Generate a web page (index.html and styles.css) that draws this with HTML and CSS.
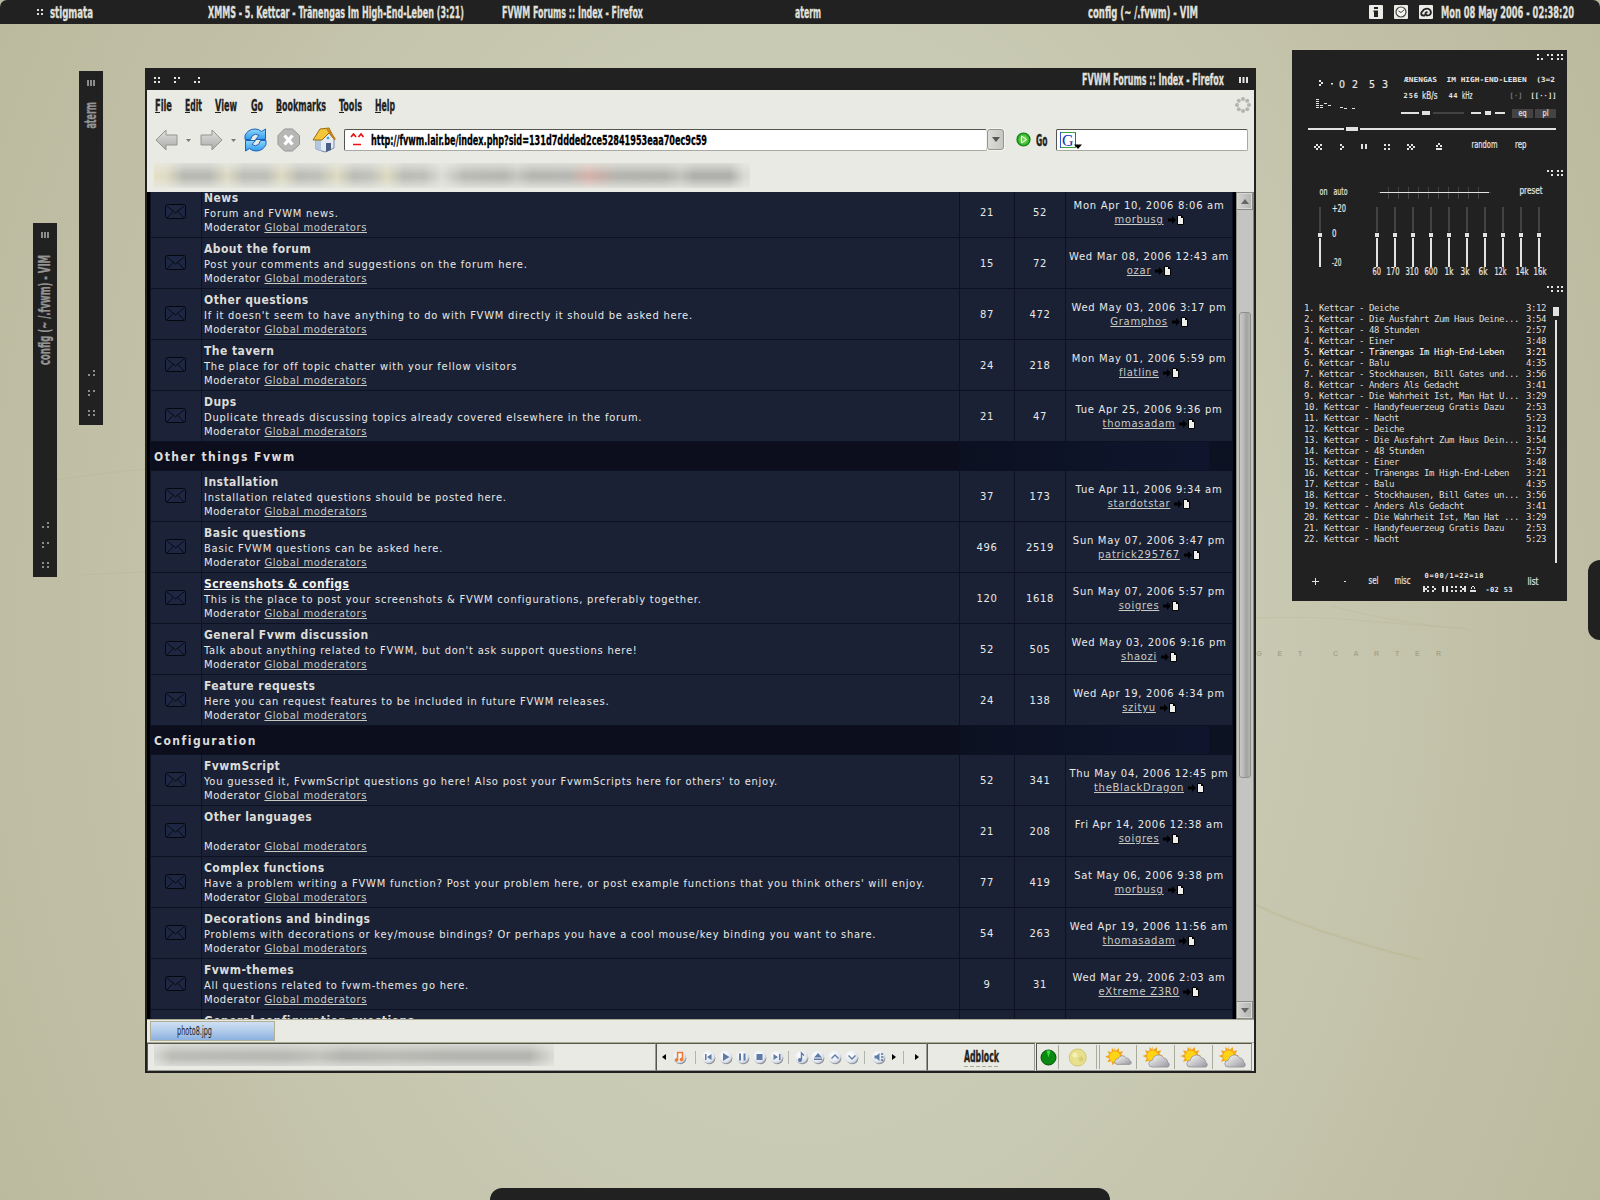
FILE: index.html
```html
<!DOCTYPE html>
<html lang="en">
<head>
<meta charset="utf-8">
<title>stigmata</title>
<link rel="stylesheet" href="styles.css">
</head>
<body>
<svg class="defs" width="0" height="0">
  <defs>
    <linearGradient id="gGrey" x1="0" y1="0" x2="0" y2="1"><stop offset="0" stop-color="#e2e2e0"/><stop offset="1" stop-color="#a9aaa8"/></linearGradient>
    <linearGradient id="gBlue" x1="0" y1="0" x2="0" y2="1"><stop offset="0" stop-color="#8fd6fb"/><stop offset="1" stop-color="#2f9bee"/></linearGradient>
    <linearGradient id="gCloud" x1="0" y1="0" x2="1" y2="1"><stop offset="0" stop-color="#fdfdfd"/><stop offset="1" stop-color="#96969e"/></linearGradient>
    <radialGradient id="gBtn" cx=".4" cy=".35" r=".7"><stop offset="0" stop-color="#ffffff"/><stop offset=".7" stop-color="#e3e8f0"/><stop offset="1" stop-color="#b4bcc9"/></radialGradient>
    <radialGradient id="gGreen"><stop offset="0" stop-color="#b5f57e"/><stop offset="1" stop-color="#17a51c"/></radialGradient>
    <symbol id="mail" viewBox="0 0 21 16"><rect x=".5" y=".5" width="20" height="14" rx="2" fill="#1e2742" stroke="#05070f"/><path d="M2 2l8.500 7L19 2M2 14l6-6.500M19 14l-6-6.500" fill="none" stroke="#070a14"/></symbol>
    <symbol id="goto" viewBox="0 0 16 10"><path d="M0 3.500h4V1l4 4-4 4V6.500h-4z" fill="#000"/><path d="M9.500 .5h4l2 2v7h-6z" fill="#eeeeea" stroke="#000"/><path d="M13 0l3 3h-3z" fill="#000"/></symbol>
    <symbol id="ball" viewBox="0 0 16 15"><circle cx="8.300" cy="8.300" r="6" fill="#85888f"/><circle cx="7.500" cy="7" r="6.500" fill="url(#gBtn)"/></symbol>
    <symbol id="sun" viewBox="0 0 30 24"><path d="M11 0l1.500 4 3.500-3 .2 4.500 4.300-1-2 4 4 2-4 2 1.500 4-4-1-1 4.500-3-3.200-3 3.200-1-4.500-4.500 1 2-4-4.500-2 4.500-2-2-4 4.500 1 .3-4.500 3 3z" fill="#f3a51c"/><circle cx="11.500" cy="10.500" r="5.800" fill="#ffd414"/></symbol>
    <symbol id="cloudS" viewBox="0 0 30 24"><use href="#sun"/><path d="M14 19a3 3 0 0 1 1-6 5 5 0 0 1 9-1 3 3 0 0 1 3.500 3 2 2 0 0 1 0 4z" fill="url(#gCloud)" stroke="#85858c" stroke-width=".7"/></symbol>
    <symbol id="cloudL" viewBox="0 0 30 24"><use href="#sun"/><path d="M11 22a3.500 3.500 0 0 1 0-7 6.500 6.500 0 0 1 12-2.500 4 4 0 0 1 4 4.500 2.600 2.600 0 0 1 0 5z" fill="url(#gCloud)" stroke="#85858c" stroke-width=".7"/></symbol>
  </defs>
</svg>

<main class="desktop">
  <svg class="wallpaper" width="1600" height="1200" viewBox="0 0 1600 1200">
    <path d="M1250 902q60 30 172 58" fill="none" stroke="#b9b88f" stroke-width="2" opacity=".5"/>
    <path d="M1256 618q60-2 100 2t110 8M1330 606q60 16 140 24" fill="none" stroke="#b5b48f" opacity=".3"/>
    <path d="M57 480q50-8 90-11M80 575q30-2 65-3" fill="none" stroke="#b3b28e" opacity=".35"/>
    <text class="carter" y="656" x="1256.500 1277.500 1298 1315 1333 1353.500 1374 1395 1415 1436">GET CARTER</text>
  </svg>

  <header class="topbar">
    <span></span>
    <svg width="7" height="8"><path d="M0 1h2v2H0zM4 1h2v2H4zM0 5h2v2H0zM4 5h2v2H4z" fill="#ddd"/></svg>
    <svg class="lbl" width="44" height="24"><text y="17.500" textLength="43" lengthAdjust="spacingAndGlyphs">stigmata</text></svg>
    <svg class="lbl" width="260" height="24"><text y="17.500" textLength="256" lengthAdjust="spacingAndGlyphs">XMMS - 5. Kettcar - Tränengas Im High-End-Leben (3:21)</text></svg>
    <svg class="lbl" width="145" height="24"><text y="17.500" textLength="141" lengthAdjust="spacingAndGlyphs">FVWM Forums :: Index - Firefox</text></svg>
    <svg class="lbl" width="30" height="24"><text y="17.500" textLength="26" lengthAdjust="spacingAndGlyphs">aterm</text></svg>
    <svg class="lbl" width="114" height="24"><text y="17.500" textLength="110" lengthAdjust="spacingAndGlyphs">config (~ /.fvwm) - VIM</text></svg>
    <svg width="14" height="14"><rect width="14" height="14" rx="1" fill="#ecebe6"/><path d="M5 2h4v2H5zM4.500 5.500H9V12H5V7h-.5z" fill="#222"/></svg>
    <svg width="14" height="14"><rect width="14" height="14" rx="1" fill="#ecebe6"/><circle cx="7" cy="7" r="5" fill="#f5f5f0" stroke="#444" stroke-width="1.200"/><path d="M7 7.500l3-2.500M7 7.500L4.500 6" stroke="#444" fill="none"/></svg>
    <svg width="14" height="14"><rect width="14" height="14" rx="1" fill="#ecebe6"/><path d="M6 10.500H4Q1.500 10 2.500 7.500L5 4.500Q9 2.500 11 5q2 3-.5 5-2.500 1-4-.5-.5-2 2-2.500" fill="none" stroke="#222" stroke-width="1.800"/></svg>
    <svg class="lbl" width="136" height="24"><text y="17.500" textLength="133" lengthAdjust="spacingAndGlyphs">Mon 08 May 2006 - 02:38:20</text></svg>
  </header>

  <svg class="shade shade-aterm" width="24" height="354">
    <path d="M8 9h2v6H8zM11 9h2v6h-2zM14 9h2v6h-2z"/>
    <text transform="translate(16.500 57.500) rotate(-90)" textLength="26.500" lengthAdjust="spacingAndGlyphs">aterm</text>
    <path d="M14 299h2v2h-2zM9 303h2v2H9zM14 303h2v2h-2zM9 319h2v2H9zM14 319h2v2h-2zM9 323h2v2H9zM9 339h2v2H9zM14 339h2v2h-2zM9 343h2v2H9zM14 343h2v2h-2z"/>
  </svg>
  <svg class="shade shade-vim" width="24" height="354">
    <path d="M8 9h2v6H8zM11 9h2v6h-2zM14 9h2v6h-2z"/>
    <text transform="translate(16.500 142) rotate(-90)" textLength="110" lengthAdjust="spacingAndGlyphs">config (~ /.fvwm) - VIM</text>
    <path d="M14 299h2v2h-2zM9 303h2v2H9zM14 303h2v2h-2zM9 319h2v2H9zM14 319h2v2h-2zM9 323h2v2H9zM9 339h2v2H9zM14 339h2v2h-2zM9 343h2v2H9zM14 343h2v2h-2z"/>
  </svg>

  <section class="browser">
    <div class="titlebar">
      <svg width="48" height="22"><path d="M0 9h2v2H0zM4 9h2v2H4zM0 13h2v2H0zM4 13h2v2H4zM20 9h2v2h-2zM24 9h2v2h-2zM20 13h2v2h-2zM44 9h2v2h-2zM40 13h2v2h-2zM44 13h2v2h-2z" fill="#e4e4e0"/></svg>
      <svg class="lbl title" width="157" height="22"><text y="16.500" textLength="142" lengthAdjust="spacingAndGlyphs">FVWM Forums :: Index - Firefox</text></svg>
      <svg width="9" height="22"><path d="M0 9h2v6H0zM3.500 9h2v6h-2zM7 9h2v6H7z" fill="#e4e4e0"/></svg>
    </div>

    <nav class="menubar">
      <svg width="30" height="29"><text y="20.500" textLength="17" lengthAdjust="spacingAndGlyphs">File</text><path d="M0 22.500h5"/></svg>
      <svg width="30" height="29"><text y="20.500" textLength="17" lengthAdjust="spacingAndGlyphs">Edit</text><path d="M0 22.500h5"/></svg>
      <svg width="36" height="29"><text y="20.500" textLength="22" lengthAdjust="spacingAndGlyphs">View</text><path d="M0 22.500h6"/></svg>
      <svg width="25" height="29"><text y="20.500" textLength="12" lengthAdjust="spacingAndGlyphs">Go</text><path d="M0 22.500h6"/></svg>
      <svg width="63" height="29"><text y="20.500" textLength="50" lengthAdjust="spacingAndGlyphs">Bookmarks</text><path d="M0 22.500h6"/></svg>
      <svg width="36" height="29"><text y="20.500" textLength="23" lengthAdjust="spacingAndGlyphs">Tools</text><path d="M0 22.500h5"/></svg>
      <svg width="30" height="29"><text y="20.500" textLength="20" lengthAdjust="spacingAndGlyphs">Help</text><path d="M0 22.500h6"/></svg>
      <svg class="throbber" width="16" height="16"><g fill="#b4b5b1"><circle cx="8" cy="2" r="2"/><circle cx="12.200" cy="3.800" r="2"/><circle cx="14" cy="8" r="2"/><circle cx="12.200" cy="12.200" r="2"/><circle cx="8" cy="14" r="2"/><circle cx="3.800" cy="12.200" r="2"/><circle cx="2" cy="8" r="2"/><circle cx="3.800" cy="3.800" r="2"/></g></svg>
    </nav>

    <div class="navbar">
      <svg width="24" height="24"><path d="M1 12L11 2v5h11v10H11v5z" fill="url(#gGrey)" stroke="#94958f"/></svg>
      <svg width="6" height="24"><path d="M0 11h5l-2.500 3z" fill="#777"/></svg>
      <svg width="24" height="24"><path d="M22 12L12 2v5H1v10h11v5z" fill="url(#gGrey)" stroke="#94958f"/></svg>
      <svg width="6" height="24"><path d="M0 11h5l-2.500 3z" fill="#777"/></svg>
      <svg width="24" height="24"><path d="M1 11.500V7.500Q4 1 11 1q4 0 6.500 2.500L21.500 1v10.500H11.500L15 7.500Q11.500 5 8.500 7.500l-2 4z" fill="url(#gBlue)" stroke="#1c62b8"/><path d="M22 12.500v4Q19 23 12 23q-4 0-6.500-2.500L1.500 23V12.500h10L8 16.500q3.500 2.500 6.500 0l2-4z" fill="url(#gBlue)" stroke="#1c62b8"/></svg>
      <svg width="25" height="24"><path d="M7.500 1h8l7 6.500v9l-7 6.500h-8l-6.500-6.500v-9z" fill="#b7b8b5" stroke="#949590"/><path d="M7.500 7.500l8 9M15.500 7.500l-8 9" stroke="#fff" stroke-width="3.200"/></svg>
      <svg width="26" height="26"><path d="M4 12v10l9 3 9-4v-9l-5-6z" fill="#e4ebf4" stroke="#7388ab"/><path d="M4 12v10l5 2V10z" fill="#b5c6df"/><path d="M14 16h5v7l-5 2z" fill="#4a5f83"/><path d="M1 13L8 2l9-1 6 12-6-7-7 7z" fill="#f5c63a" stroke="#9a6a12"/><path d="M15 2l8 10" stroke="#c4811b" stroke-width="2"/><circle cx="16" cy="11" r="1.300" fill="#36a3d8"/></svg>
      <div class="url">
        <svg width="15" height="14"><path d="M1 4l2.500-3L6 4M8.500 4L11 1l2.500 3M3 11.500h8" fill="none" stroke="#e11" stroke-width="1.700"/></svg>
        <svg class="dark" width="340" height="20"><text y="14.500" textLength="336" lengthAdjust="spacingAndGlyphs">http://fvwm.lair.be/index.php?sid=131d7ddded2ce52841953eaa70ec9c59</text></svg>
      </div>
      <div class="combo"><svg width="8" height="5"><path d="M0 0h8L4 5z" fill="#555"/></svg></div>
      <svg width="15" height="15"><circle cx="7.500" cy="7.500" r="6.500" fill="url(#gGreen)" stroke="#118015" stroke-width="1.200"/><path d="M5.500 4l5 3.500-5 3.500z" fill="#6fd95a" stroke="#fff"/></svg>
      <svg class="dark go" width="14" height="24"><text y="17.500" textLength="11.500" lengthAdjust="spacingAndGlyphs">Go</text></svg>
      <div class="search"><svg width="23" height="18"><rect x=".5" y="1.500" width="15" height="15" fill="#fff" stroke="#3aa53c"/><path d="M.5 1v16" stroke="#2a55cc"/><path d="M15.500 2v12" stroke="#d22"/><text x="2" y="14.500" class="g">G</text><path d="M14 13.500h8l-4 4.500z" fill="#000"/></svg></div>
    </div>

    <div class="bookmarks"><div class="smear smear-marks"></div></div>

    <div class="viewport">
      <div class="forum">
        <div class="row"><svg class="mail"><use href="#mail"/></svg><div class="topic"><h3>News</h3><p>Forum and FVWM news.</p><small>Moderator <a>Global moderators</a></small></div><div class="n">21</div><div class="n">52</div><div class="last"><span>Mon Apr 10, 2006 8:06 am</span><span><a>morbusg</a><svg><use href="#goto"/></svg></span></div></div>
        <div class="row"><svg class="mail"><use href="#mail"/></svg><div class="topic"><h3>About the forum</h3><p>Post your comments and suggestions on the forum here.</p><small>Moderator <a>Global moderators</a></small></div><div class="n">15</div><div class="n">72</div><div class="last"><span>Wed Mar 08, 2006 12:43 am</span><span><a>ozar</a><svg><use href="#goto"/></svg></span></div></div>
        <div class="row"><svg class="mail"><use href="#mail"/></svg><div class="topic"><h3>Other questions</h3><p>If it doesn't seem to have anything to do with FVWM directly it should be asked here.</p><small>Moderator <a>Global moderators</a></small></div><div class="n">87</div><div class="n">472</div><div class="last"><span>Wed May 03, 2006 3:17 pm</span><span><a>Gramphos</a><svg><use href="#goto"/></svg></span></div></div>
        <div class="row"><svg class="mail"><use href="#mail"/></svg><div class="topic"><h3>The tavern</h3><p>The place for off topic chatter with your fellow visitors</p><small>Moderator <a>Global moderators</a></small></div><div class="n">24</div><div class="n">218</div><div class="last"><span>Mon May 01, 2006 5:59 pm</span><span><a>flatline</a><svg><use href="#goto"/></svg></span></div></div>
        <div class="row"><svg class="mail"><use href="#mail"/></svg><div class="topic"><h3>Dups</h3><p>Duplicate threads discussing topics already covered elsewhere in the forum.</p><small>Moderator <a>Global moderators</a></small></div><div class="n">21</div><div class="n">47</div><div class="last"><span>Tue Apr 25, 2006 9:36 pm</span><span><a>thomasadam</a><svg><use href="#goto"/></svg></span></div></div>
        <h2 class="category">Other things Fvwm</h2>
        <div class="row"><svg class="mail"><use href="#mail"/></svg><div class="topic"><h3>Installation</h3><p>Installation related questions should be posted here.</p><small>Moderator <a>Global moderators</a></small></div><div class="n">37</div><div class="n">173</div><div class="last"><span>Tue Apr 11, 2006 9:34 am</span><span><a>stardotstar</a><svg><use href="#goto"/></svg></span></div></div>
        <div class="row"><svg class="mail"><use href="#mail"/></svg><div class="topic"><h3>Basic questions</h3><p>Basic FVWM questions can be asked here.</p><small>Moderator <a>Global moderators</a></small></div><div class="n">496</div><div class="n">2519</div><div class="last"><span>Sun May 07, 2006 3:47 pm</span><span><a>patrick295767</a><svg><use href="#goto"/></svg></span></div></div>
        <div class="row"><svg class="mail"><use href="#mail"/></svg><div class="topic"><h3 class="hover">Screenshots &amp; configs</h3><p>This is the place to post your screenshots &amp; FVWM configurations, preferably together.</p><small>Moderator <a>Global moderators</a></small></div><div class="n">120</div><div class="n">1618</div><div class="last"><span>Sun May 07, 2006 5:57 pm</span><span><a>soigres</a><svg><use href="#goto"/></svg></span></div></div>
        <div class="row"><svg class="mail"><use href="#mail"/></svg><div class="topic"><h3>General Fvwm discussion</h3><p>Talk about anything related to FVWM, but don't ask support questions here!</p><small>Moderator <a>Global moderators</a></small></div><div class="n">52</div><div class="n">505</div><div class="last"><span>Wed May 03, 2006 9:16 pm</span><span><a>shaozi</a><svg><use href="#goto"/></svg></span></div></div>
        <div class="row"><svg class="mail"><use href="#mail"/></svg><div class="topic"><h3>Feature requests</h3><p>Here you can request features to be included in future FVWM releases.</p><small>Moderator <a>Global moderators</a></small></div><div class="n">24</div><div class="n">138</div><div class="last"><span>Wed Apr 19, 2006 4:34 pm</span><span><a>szityu</a><svg><use href="#goto"/></svg></span></div></div>
        <h2 class="category">Configuration</h2>
        <div class="row"><svg class="mail"><use href="#mail"/></svg><div class="topic"><h3>FvwmScript</h3><p>You guessed it, FvwmScript questions go here! Also post your FvwmScripts here for others' to enjoy.</p><small>Moderator <a>Global moderators</a></small></div><div class="n">52</div><div class="n">341</div><div class="last"><span>Thu May 04, 2006 12:45 pm</span><span><a>theBlackDragon</a><svg><use href="#goto"/></svg></span></div></div>
        <div class="row"><svg class="mail"><use href="#mail"/></svg><div class="topic"><h3>Other languages</h3><p></p><small>Moderator <a>Global moderators</a></small></div><div class="n">21</div><div class="n">208</div><div class="last"><span>Fri Apr 14, 2006 12:38 am</span><span><a>soigres</a><svg><use href="#goto"/></svg></span></div></div>
        <div class="row"><svg class="mail"><use href="#mail"/></svg><div class="topic"><h3>Complex functions</h3><p>Have a problem writing a FVWM function? Post your problem here, or post example functions that you think others' will enjoy.</p><small>Moderator <a>Global moderators</a></small></div><div class="n">77</div><div class="n">419</div><div class="last"><span>Sat May 06, 2006 9:38 pm</span><span><a>morbusg</a><svg><use href="#goto"/></svg></span></div></div>
        <div class="row"><svg class="mail"><use href="#mail"/></svg><div class="topic"><h3>Decorations and bindings</h3><p>Problems with decorations or key/mouse bindings? Or perhaps you have a cool mouse/key binding you want to share.</p><small>Moderator <a>Global moderators</a></small></div><div class="n">54</div><div class="n">263</div><div class="last"><span>Wed Apr 19, 2006 11:56 am</span><span><a>thomasadam</a><svg><use href="#goto"/></svg></span></div></div>
        <div class="row"><svg class="mail"><use href="#mail"/></svg><div class="topic"><h3>Fvwm-themes</h3><p>All questions related to fvwm-themes go here.</p><small>Moderator <a>Global moderators</a></small></div><div class="n">9</div><div class="n">31</div><div class="last"><span>Wed Mar 29, 2006 2:03 am</span><span><a>eXtreme Z3R0</a><svg><use href="#goto"/></svg></span></div></div>
        <div class="row"><span class="mail"></span><div class="topic"><h3>General configuration questions</h3></div><div class="n"></div><div class="n"></div><div class="last"></div></div>
      </div>
      <div class="scrollbar">
        <div class="step"><svg width="8" height="5"><path d="M0 5h8L4 0z" fill="#666"/></svg></div>
        <div class="track"><div class="thumb"></div></div>
        <div class="step"><svg width="8" height="5"><path d="M0 0h8L4 5z" fill="#666"/></svg></div>
      </div>
    </div>

    <div class="tabs"><div class="tab"><svg width="38" height="18"><text y="12.500" textLength="35" lengthAdjust="spacingAndGlyphs">photo8.jpg</text></svg></div></div>

    <footer class="status">
      <div class="panel"><div class="smear smear-status"></div></div>
      <div class="panel">
        <svg width="269" height="26" viewBox="658 1044 269 26">
          <path d="M667 1054v6l-4-3zM893 1054v6l4-3zM916 1054v6l4-3z" fill="#000"/>
          <path d="M696.500 1051v13M789.500 1051v13M865.500 1051v13M904.500 1051v13" stroke="#b1b3ad"/>
          <use href="#ball" x="673" y="1050" width="16" height="15"/><use href="#ball" x="702" y="1050" width="16" height="15"/><use href="#ball" x="719" y="1050" width="16" height="15"/><use href="#ball" x="736" y="1050" width="16" height="15"/><use href="#ball" x="753" y="1050" width="16" height="15"/><use href="#ball" x="770" y="1050" width="16" height="15"/><use href="#ball" x="795" y="1050" width="16" height="15"/><use href="#ball" x="811" y="1050" width="16" height="15"/><use href="#ball" x="828" y="1050" width="16" height="15"/><use href="#ball" x="845" y="1050" width="16" height="15"/><use href="#ball" x="872" y="1050" width="16" height="15"/>
          <path d="M678.500 1060v-7.500h5v6.500" fill="none" stroke="#ee7a30" stroke-width="1.500"/><circle cx="677.500" cy="1060" r="1.800" fill="#ee7a30"/><circle cx="682.500" cy="1059.500" r="1.800" fill="#ee7a30"/>
          <g fill="#5e7ba5"><path d="M706 1054h1.500v6H706zM712.500 1054v6l-4.500-3zM724 1053v8l6.500-4zM740 1053.500h2v7h-2zM744.500 1053.500h2v7h-2zM757.500 1054h6v6h-6zM774.500 1054v6l4.500-3zM780 1054h1.500v6H780zM815 1057.500l4-4.500 4 4.500zM815 1058.500h8v1.500h-8z"/><circle cx="801" cy="1060" r="2"/><path d="M875.500 1055.500h2l3-2.500v8l-3-2.500h-2z"/></g>
          <path d="M802.500 1060v-7l2.500 2.500M832.500 1058.500l3.500-3.500 3.500 3.500M849.500 1055.500l3.500 3.500 3.500-3.500M882 1054.500l2-1M882 1057h2.500M882 1059.500l2 1" fill="none" stroke="#5e7ba5" stroke-width="1.400"/>
        </svg>
      </div>
      <div class="panel"><svg class="dark adblock" width="37" height="26"><text y="17.500" textLength="35" lengthAdjust="spacingAndGlyphs">Adblock</text><path d="M0 22.500h35" stroke="#a5a88f" stroke-dasharray="4 2"/></svg></div>
      <div class="panel">
        <svg width="214" height="26" viewBox="1037 1044 214 26">
          <circle cx="1048.500" cy="1057.500" r="7.500" fill="#0a8a12" stroke="#04500a"/><path d="M1048.500 1057.500l-2-7h4z" fill="#34e23c"/>
          <circle cx="1077.700" cy="1057.500" r="8.500" fill="#e9e08e" stroke="#cfc66f"/><circle cx="1075" cy="1055" r="2.500" fill="#f6f0b6"/><circle cx="1081" cy="1059" r="2.500" fill="#d9cf7a"/>
          <path d="M1058.500 1045v24M1096.500 1045v24M1099.500 1045v24M1136.500 1045v24M1174.500 1045v24M1212.500 1045v24" stroke="#aaab9a"/>
          <use href="#cloudS" x="1104" y="1047" width="28" height="22"/><use href="#cloudL" x="1141" y="1046" width="30" height="23"/><use href="#cloudL" x="1179" y="1046" width="30" height="23"/><use href="#cloudL" x="1217" y="1046" width="30" height="23"/>
        </svg>
      </div>
    </footer>
  </section>

  <section class="xmms">
    <svg width="275" height="116" viewBox="1292 50 275 116">
      <path class="w" d="M1537 54h2v2h-2zM1537 58h2v2h-2zM1541 58h2v2h-2zM1547 54h2v2h-2zM1551 54h2v2h-2zM1551 58h2v2h-2zM1557 54h2v2h-2zM1561 54h2v2h-2zM1557 58h2v2h-2zM1561 58h2v2h-2z"/>
      <path class="w" d="M1319 80h2v2h2v2h-2v2h-2v-2h2v-2h-2zM1331 83h2v1.500h-2z"/>
      <path class="w" d="M1316 99h3v1h-3zM1316 101h3v1h-3zM1316 103h3v1h-3zM1316 105h3v1h-3zM1316 107h3v1h-3zM1320 105h3v1h-3zM1320 107h3v1h-3zM1324 103h3v1h-3zM1328 105h3v1h-3zM1340 107h3v1h-3zM1344 108h3v1h-3zM1352 108h3v1h-3z"/>
      <g class="pix"><text x="1339 1352 1369 1382" y="88" font-size="10.500">0253</text>
      <text class="b" x="1404" y="82" font-size="7" textLength="151" lengthAdjust="spacingAndGlyphs" xml:space="preserve">ÆNENGAS  IM HIGH-END-LEBEN  (3=2</text>
      <text class="b" x="1403.500" y="97.500" font-size="7" textLength="14.500">256</text><text x="1422" y="99" font-size="11" textLength="15.500" lengthAdjust="spacingAndGlyphs">kB/s</text>
      <text class="b" x="1448.500" y="97.500" font-size="7" textLength="9">44</text><text x="1462" y="99" font-size="11" textLength="10.500" lengthAdjust="spacingAndGlyphs">kHz</text>
      <text class="b dim" x="1509.500" y="98" font-size="7" textLength="13">[·]</text><text class="b" x="1530.500" y="98" font-size="7" textLength="26">[[··]]</text></g>
      <path class="w" d="M1401 112h18v2h-18zM1422 111h8v4h-8zM1471 112h10v2h-10zM1485 111h6v4h-6zM1495 112h10v2h-10zM1308 128h36v2h-36zM1346 127h12v4h-12zM1360 128h196v2h-196z"/>
      <path class="d" d="M1433 112h31v2h-31zM1512 109h21v9h-21zM1535 109h21v9h-21z"/>
      <g class="pix"><text x="1518.500" y="116" font-size="9.500" textLength="8" lengthAdjust="spacingAndGlyphs">eq</text><text x="1542.500" y="116" font-size="9.500" textLength="6" lengthAdjust="spacingAndGlyphs">pl</text>
      <text x="1471.500" y="148" font-size="10.500" textLength="26" lengthAdjust="spacingAndGlyphs">random</text><text x="1515" y="148" font-size="10.500" textLength="11.500" lengthAdjust="spacingAndGlyphs">rep</text></g>
      <path class="w" d="M1316 144h2v2h-2zM1314 146h2v2h-2zM1316 148h2v2h-2zM1320 144h2v2h-2zM1318 146h2v2h-2zM1320 148h2v2h-2zM1340 144h2v2h-2zM1342 146h2v2h-2zM1340 148h2v2h-2zM1361 144h2v5h-2zM1365 144h2v5h-2zM1384 144h2v2h-2zM1388 144h2v2h-2zM1384 148h2v2h-2zM1388 148h2v2h-2zM1407 144h2v2h-2zM1409 146h2v2h-2zM1407 148h2v2h-2zM1411 144h2v2h-2zM1413 146h2v2h-2zM1411 148h2v2h-2zM1438 143h2v2h-2zM1436 145h2v2h-2zM1440 145h2v2h-2zM1436 148h6v2h-6z"/>
    </svg>
    <svg width="275" height="116" viewBox="1292 166 275 116">
      <path class="w" d="M1547 170h2v2h-2zM1551 170h2v2h-2zM1551 174h2v2h-2zM1557 170h2v2h-2zM1561 170h2v2h-2zM1557 174h2v2h-2zM1561 174h2v2h-2z"/>
      <path class="d" d="M1388 187h1v12h-1zM1398 187h1v12h-1zM1408 187h1v12h-1zM1418 187h1v12h-1zM1428 187h1v12h-1zM1438 187h1v12h-1zM1448 187h1v12h-1zM1458 187h1v12h-1zM1468 187h1v12h-1zM1478 187h1v12h-1zM1378 192h113v1h-113z"/>
      <path class="w" d="M1380 192h109v1h-109z"/>
      <path class="d" d="M1319 207h2v25h-2zM1376 207h2v25h-2zM1394 207h2v25h-2zM1412 207h2v25h-2zM1430 207h2v25h-2zM1448 207h2v25h-2zM1466 207h2v25h-2zM1484 207h2v25h-2zM1502 207h2v25h-2zM1520 207h2v25h-2zM1538 207h2v25h-2z"/>
      <path class="w" d="M1318 233h4v4h-4zM1375 233h4v4h-4zM1393 233h4v4h-4zM1411 233h4v4h-4zM1429 233h4v4h-4zM1447 233h4v4h-4zM1465 233h4v4h-4zM1483 233h4v4h-4zM1501 233h4v4h-4zM1519 233h4v4h-4zM1537 233h4v4h-4zM1319 238h2v29h-2zM1376 238h2v29h-2zM1394 238h2v29h-2zM1412 238h2v29h-2zM1430 238h2v29h-2zM1448 238h2v29h-2zM1466 238h2v29h-2zM1484 238h2v29h-2zM1502 238h2v29h-2zM1520 238h2v29h-2zM1538 238h2v29h-2z"/>
      <g class="pix" font-size="10.500">
        <text x="1319.500" y="195" textLength="8" lengthAdjust="spacingAndGlyphs">on</text><text x="1333.500" y="195" textLength="14" lengthAdjust="spacingAndGlyphs">auto</text><text x="1519.500" y="194" textLength="23" lengthAdjust="spacingAndGlyphs">preset</text>
        <text x="1332" y="211.500" textLength="14" lengthAdjust="spacingAndGlyphs">+20</text><text x="1332" y="236.500" textLength="4.500" lengthAdjust="spacingAndGlyphs">0</text><text x="1332" y="265.500" textLength="9.500" lengthAdjust="spacingAndGlyphs">-20</text>
        <text x="1372.500" y="275" textLength="8.500" lengthAdjust="spacingAndGlyphs">60</text><text x="1386.500" y="275" textLength="13" lengthAdjust="spacingAndGlyphs">170</text><text x="1405.500" y="275" textLength="13" lengthAdjust="spacingAndGlyphs">310</text><text x="1424.500" y="275" textLength="13" lengthAdjust="spacingAndGlyphs">600</text><text x="1444.500" y="275" textLength="9" lengthAdjust="spacingAndGlyphs">1k</text><text x="1460.500" y="275" textLength="9" lengthAdjust="spacingAndGlyphs">3k</text><text x="1478.500" y="275" textLength="9" lengthAdjust="spacingAndGlyphs">6k</text><text x="1494.500" y="275" textLength="12" lengthAdjust="spacingAndGlyphs">12k</text><text x="1515.500" y="275" textLength="13" lengthAdjust="spacingAndGlyphs">14k</text><text x="1533.500" y="275" textLength="13" lengthAdjust="spacingAndGlyphs">16k</text>
      </g>
    </svg>
    <div class="playlist">
      <ol class="tracks">
        <li><span>1. Kettcar - Deiche</span><time>3:12</time></li>
        <li><span>2. Kettcar - Die Ausfahrt Zum Haus Deine...</span><time>3:54</time></li>
        <li><span>3. Kettcar - 48 Stunden</span><time>2:57</time></li>
        <li><span>4. Kettcar - Einer</span><time>3:48</time></li>
        <li class="on"><span>5. Kettcar - Tränengas Im High-End-Leben</span><time>3:21</time></li>
        <li><span>6. Kettcar - Balu</span><time>4:35</time></li>
        <li><span>7. Kettcar - Stockhausen, Bill Gates und...</span><time>3:56</time></li>
        <li><span>8. Kettcar - Anders Als Gedacht</span><time>3:41</time></li>
        <li><span>9. Kettcar - Die Wahrheit Ist, Man Hat U...</span><time>3:29</time></li>
        <li><span>10. Kettcar - Handyfeuerzeug Gratis Dazu</span><time>2:53</time></li>
        <li><span>11. Kettcar - Nacht</span><time>5:23</time></li>
        <li><span>12. Kettcar - Deiche</span><time>3:12</time></li>
        <li><span>13. Kettcar - Die Ausfahrt Zum Haus Dein...</span><time>3:54</time></li>
        <li><span>14. Kettcar - 48 Stunden</span><time>2:57</time></li>
        <li><span>15. Kettcar - Einer</span><time>3:48</time></li>
        <li><span>16. Kettcar - Tränengas Im High-End-Leben</span><time>3:21</time></li>
        <li><span>17. Kettcar - Balu</span><time>4:35</time></li>
        <li><span>18. Kettcar - Stockhausen, Bill Gates un...</span><time>3:56</time></li>
        <li><span>19. Kettcar - Anders Als Gedacht</span><time>3:41</time></li>
        <li><span>20. Kettcar - Die Wahrheit Ist, Man Hat ...</span><time>3:29</time></li>
        <li><span>21. Kettcar - Handyfeuerzeug Gratis Dazu</span><time>2:53</time></li>
        <li><span>22. Kettcar - Nacht</span><time>5:23</time></li>
      </ol>
      <svg width="21" height="284" viewBox="1546 282 21 284"><path class="w" d="M1547 286h2v2h-2zM1551 286h2v2h-2zM1551 290h2v2h-2zM1557 286h2v2h-2zM1561 286h2v2h-2zM1557 290h2v2h-2zM1561 290h2v2h-2zM1553 307h6v9h-6zM1555 320h2v243h-2z"/></svg>
    </div>
    <svg width="275" height="35" viewBox="1292 566 275 35">
      <path class="w" d="M1312 581h7v1h-7zM1315 578h1v7h-1zM1344 581h2v1h-2z"/>
      <g class="pix"><text x="1368.500" y="584" font-size="10.500" textLength="10" lengthAdjust="spacingAndGlyphs">sel</text><text x="1394.500" y="584" font-size="10.500" textLength="16" lengthAdjust="spacingAndGlyphs">misc</text><text x="1527.500" y="585" font-size="10.500" textLength="11" lengthAdjust="spacingAndGlyphs">list</text>
      <text class="b" x="1424.500" y="578" font-size="7" textLength="59">0=00/1=22=18</text><text class="b" x="1485.500" y="591.500" font-size="7" textLength="27" xml:space="preserve">-02 53</text></g>
      <path class="w" d="M1423 586h2v6h-2zM1425 588h2v2h-2zM1427 586h2v2h-2zM1427 590h2v2h-2zM1432 586h2v2h-2zM1434 588h2v2h-2zM1432 590h2v2h-2zM1442 586h2v6h-2zM1446 586h2v6h-2zM1451 586h2v2h-2zM1455 586h2v2h-2zM1451 590h2v2h-2zM1455 590h2v2h-2zM1460 586h2v2h-2zM1460 590h2v2h-2zM1462 588h2v2h-2zM1464 586h2v6h-2zM1472 586h2v1h-2zM1471 587h1v2h-1zM1474 587h1v2h-1zM1470 590h6v2h-6z"/>
    </svg>
  </section>

  <div class="drawer drawer-right"></div>
  <div class="drawer drawer-bottom"></div>
</main>
</body>
</html>
```
FILE: styles.css
```css
* { box-sizing: border-box; }
body { margin: 0; background: #000; font-family: "DejaVu Sans", sans-serif; }
svg { display: block; flex: none; }
.defs { position: absolute; }

.desktop {
  position: relative;
  width: 1600px;
  height: 1200px;
  overflow: hidden;
  background:
    radial-gradient(ellipse 950px 1300px at 800px 620px, #cccdb8 0%, #c9cab3 45%, #c2c1a8 72%, #bab99d 100%);
}
.wallpaper { position: absolute; left: 0; top: 0; }
.carter { font: bold 7px "Liberation Sans", sans-serif; fill: #a5a58c; }

/* condensed interface face */
.lbl, .menubar svg, .dark { overflow: visible; }
.lbl text, .menubar text, .dark text, .shade text {
  font: bold 15px "DejaVu Sans Condensed", "DejaVu Sans", sans-serif;
  stroke-width: .3px;
}

.topbar {
  position: relative;
  display: grid;
  grid-template-columns: 37px 13px 157.5px 294.5px 293px 293px 281px 25px 25px 22px 1fr;
  align-items: center;
  height: 24px;
  background: #212121;
  border-radius: 7px 7px 0 0;
}
.topbar::before {
  content: "";
  position: absolute;
  inset: 0;
  z-index: -1;
  height: 8px;
  background: #000;
}
.lbl text { fill: #e0e0dc; stroke: #e0e0dc; }

.shade { position: absolute; background: #212121; fill: #8c8c8c; }
.shade text { fill: #949492; stroke: #949492; }
.shade-aterm { left: 79px; top: 71px; }
.shade-vim { left: 33px; top: 223px; }

/* browser window */
.browser {
  position: absolute;
  left: 145px;
  top: 68px;
  width: 1111px;
  height: 1005px;
  display: flex;
  flex-direction: column;
  border: solid #212121;
  border-width: 0 2px 2px;
  background: #e9eae4;
}
.titlebar { display: flex; height: 22px; padding: 0 6px 0 7px; background: #212121; }
.titlebar .title { margin-left: auto; }

.menubar { display: flex; height: 29px; padding-left: 8px; }
.menubar text, .dark text { fill: #222; stroke: #222; }
.menubar path { stroke: #222; }
.throbber { margin: 7px 3px 0 auto; }

.navbar {
  display: grid;
  grid-template-columns: 31px 14px 31px 13px 33px 35px 32px 643px 29px 20px 20px 192px;
  align-items: center;
  height: 41px;
  padding-left: 8px;
}
.url, .search {
  display: flex;
  align-items: center;
  height: 22px;
  border: 1px solid #55564f;
  border-right-color: #a8a9a3;
  border-bottom-color: #a8a9a3;
  border-radius: 2px;
  background: #fff;
}
.url { gap: 6px; padding-left: 5px; }
.url text { fill: #000; stroke: #000; font-size: 14px; }
.search { padding-left: 3px; }
.search .g { font: 16px "Liberation Serif", serif; fill: #1433b5; }
.combo {
  display: grid;
  place-items: center;
  width: 17px;
  height: 21px;
  border: 1px solid #94958f;
  border-radius: 3px;
  background: linear-gradient(90deg, #dcddd8, #c6c7c2);
  box-shadow: 0 0 0 1px #f4f4f0;
}

.bookmarks { height: 32px; padding: 3px 0 0 7px; }
.smear-marks { -webkit-mask-image: linear-gradient(180deg, rgba(0,0,0,.25), #000 45%, #000 60%, rgba(0,0,0,.2)); }
.smear-marks {
  width: 596px;
  height: 25px;
  background: linear-gradient(90deg,
    #e3e0c8 0, #dfdcc4 12px, #b9bab4 30px, #b9bab4 55px, #dcdac4 73px, #bdbeb7 90px, #bfc0b9 112px, #dddac2 128px,
    #bcbdb7 145px, #c0c1bb 165px, #dedbc3 183px, #bcbdb6 200px, #c2c3bc 217px, #dddac2 233px, #bcbdb7 250px, #bfc0ba 270px,
    #dcddd8 288px, #bbbcb7 310px, #b7b8b3 350px, #c6c7c1 363px, #b6b7b2 378px, #b8b9b4 415px, #d5b3ac 435px, #c9b1ab 445px,
    #b4b5b0 465px, #b3b4af 510px, #c3c4be 527px, #b0b1ad 540px, #b0b1ad 576px, #d9dad4 590px, #dedfd9 596px);
}
.smear-status {
  width: 400px;
  height: 22px;
  -webkit-mask-image: linear-gradient(180deg, rgba(0,0,0,.35), #000 45%, #000 65%, rgba(0,0,0,.4));
  background: linear-gradient(90deg, #d8d9d4 0, #bcbdb9 18px, #b8b9b5 130px, #c2c3be 165px, #b5b6b2 190px, #babbb6 240px, #b4b5b1 300px, #b4b5b1 375px, #cfd0ca 392px, #dbdcd6 400px);
}

.viewport { display: flex; height: 827px; overflow: hidden; background: #000; }
.forum {
  flex: none;
  width: 1083px;
  height: 860px;
  margin: -5px 3px 0 3px;
  padding-left: 1px;
  padding-right: 1px;
  background: #0c1222;
  color: #e9e9e7;
}
.row { display: grid; grid-template-columns: 51px 758px 55px 51px 166px; height: 51px; }
.row > * { border-right: 1px solid #0c1222; border-bottom: 1px solid #0c1222; background: #1a2135; }
.row > :first-child { background: #1c2338; }
.row > .last { border-right: 0; }
.row .mail { width: 51px; height: 51px; padding: 17px 15px 17px 14px; }
.topic { padding: 4px 0 0 2px; overflow: hidden; white-space: nowrap; }
.topic h3 { margin: 0; font: bold 12px/15px "DejaVu Sans Condensed", "DejaVu Sans", sans-serif; letter-spacing: .45px; color: #dcdcd8; }
.topic .hover { text-decoration: underline; color: #f2f2ee; }
.topic p { height: 15px; margin: 0; font: 11px/15px "DejaVu Sans Condensed", "DejaVu Sans", sans-serif; letter-spacing: .79px; }
.topic small { display: block; font: 10px/14px "DejaVu Sans", sans-serif; letter-spacing: .56px; }
.forum a { color: #c9cac4; text-decoration: underline; }
.n { padding-top: 19px; text-align: center; font: 10px/14px "DejaVu Sans", sans-serif; letter-spacing: .6px; }
.last { display: flex; flex-direction: column; align-items: center; padding: 12px 0 0; font: 10px/14px "DejaVu Sans", sans-serif; letter-spacing: .7px; white-space: nowrap; }
.last span { display: flex; align-items: center; }
.last svg { width: 16px; height: 10px; margin: -1px 0 0 4px; }
.category {
  height: 29px;
  margin: 0;
  padding-left: 3px;
  font: bold 12px/31px "DejaVu Sans Condensed", "DejaVu Sans", sans-serif;
  letter-spacing: 1.5px;
  color: #dcdcd8;
  background: linear-gradient(90deg, #0c0e1e 808px, #0b1120 809px, #0e1429 960px, #0f152c 1058px, #0c1222 1059px);
  border-bottom: 1px solid #0c1222;
}

.scrollbar { display: flex; flex: none; flex-direction: column; width: 18px; background: #c4c5c0; border-right: 1px solid #85867f; }
.step {
  display: grid;
  place-items: center;
  height: 18px;
  border: 1px solid #8a8b86;
  background: linear-gradient(90deg, #d4d5d0, #b3b4af);
  box-shadow: inset 0 0 0 1px #d8d9d5;
}
.track { flex: 1; padding: 102px 2px 0; border-left: 1px solid #8f908b; }
.thumb {
  height: 466px;
  border: 1px solid #8f908b;
  border-radius: 3px;
  background: linear-gradient(90deg, #c9cac5, #b9bab5 35%, #a3a49f 65%, #b5b6b1);
}

.tabs { height: 24px; padding: 1px 0 0 3px; border-top: 1px solid #a9a994; border-bottom: 1px solid #a9ac8e; }
.tab { width: 125px; height: 20px; padding: 0 0 0 26px; border: 1px solid #b0b09a; background: linear-gradient(180deg, #cfdff2, #b3cdec 45%, #8db1df); }
.tab text { font: 12.5px "DejaVu Sans Condensed", "DejaVu Sans", sans-serif; fill: #222; }

.status { display: grid; grid-template-columns: 509px 271px 108px 1fr; height: 28px; }
.panel { height: 28px; border: 1px solid #55564f; border-right-color: #999a94; border-bottom-color: #999a94; overflow: hidden; }
.panel:first-child { padding-left: 6px; }
.panel:last-child { margin: 0 2px 0 1px; }
.adblock { margin-left: 36px; }

/* media player */
.xmms { position: absolute; left: 1292px; top: 50px; width: 275px; height: 551px; background: #212121; }
.xmms .w { fill: #e2e2e0; }
.xmms .d { fill: #434343; }
.pix { fill: #e6e6e4; stroke: #e6e6e4; stroke-width: .2px; font-family: "DejaVu Sans Condensed", "DejaVu Sans", sans-serif; }
.pix .b { font-family: "DejaVu Sans Mono", monospace; font-weight: bold; stroke: none; }
.pix .dim { fill: #7a7a7a; }
.playlist { display: flex; height: 284px; }
.tracks {
  flex: 1;
  margin: 0;
  padding: 21px 0 0 12px;
  list-style: none;
  font: 9px/11px "DejaVu Sans Mono", monospace;
  letter-spacing: -.42px;
  color: #dededc;
}
.tracks li { display: flex; justify-content: space-between; height: 11px; white-space: pre; }
.tracks .on { color: #fff; }

.drawer { position: absolute; background: #212121; }
.drawer-right { left: 1588px; top: 560px; width: 24px; height: 80px; border-radius: 12px; }
.drawer-bottom { left: 490px; top: 1188px; width: 620px; height: 24px; border-radius: 12px; }
```
